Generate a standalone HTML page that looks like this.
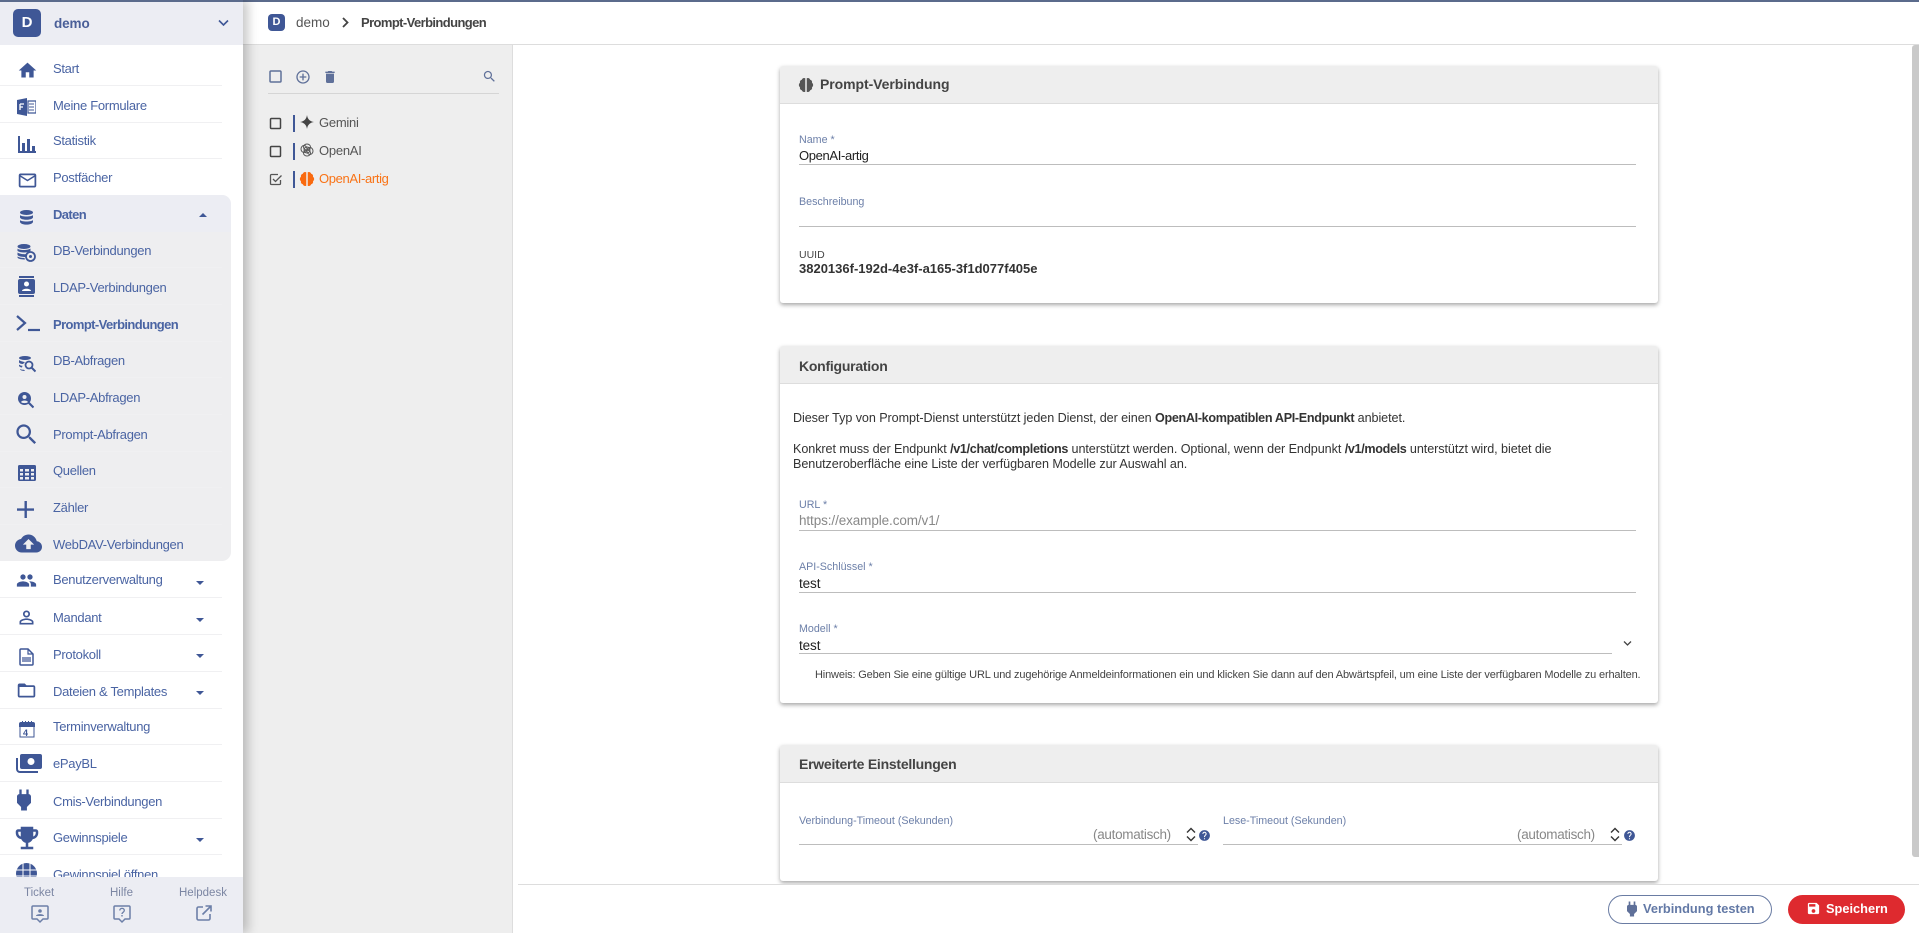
<!DOCTYPE html>
<html lang="de"><head><meta charset="utf-8"><title>Prompt-Verbindungen</title>
<style>
html,body{margin:0;padding:0;width:1919px;height:933px;overflow:hidden;background:#fff;font-family:"Liberation Sans",sans-serif}
.t{position:absolute;white-space:nowrap;line-height:16px;height:16px}
.abs{position:absolute}
svg.i{position:absolute;fill:#3f5796}
.n{left:53px;font-size:13px;letter-spacing:-.3px;color:#4a64a3}
.nb{font-weight:bold;letter-spacing:-.6px}
.sep{position:absolute;left:0;width:222px;height:1px;background:#f0f0f2}
.card{position:absolute;left:780px;width:878px;background:#fff;border-radius:3px;box-shadow:0 2px 4px rgba(0,0,0,.35)}
.ch{position:absolute;left:0;top:0;width:100%;height:37px;background:#eee;border-bottom:1px solid #ddd;border-radius:3px 3px 0 0}
.ct{font-size:14px;font-weight:bold;color:#444;letter-spacing:-.25px}
.lb{font-size:10.7px;color:#6c7fa8}
.v{font-size:13.5px;color:#222;letter-spacing:-.1px}
.ln{position:absolute;height:1px;background:#bdbdbd}
.p{font-size:12.6px;color:#333;left:793px;letter-spacing:-.07px}
.p b{letter-spacing:-.33px}
.ar{position:absolute;width:0;height:0;border-left:4px solid transparent;border-right:4px solid transparent}
.li{font-size:13px;color:#555;letter-spacing:-.25px}
.f{font-size:11.5px;color:#7c86a3}
</style></head><body>
<svg width="0" height="0" style="position:absolute"><defs>
<symbol id="plug" viewBox="0 0 24 24"><path d="M16.01 7L16 3h-2v4h-4V3H8v4h-.01C7 6.99 6 7.99 6 8.99v5.49L9.5 18v3h5v-3l3.5-3.51v-5.5c0-1-1-2-1.99-1.99z"/></symbol>
<symbol id="help" viewBox="0 0 24 24"><path d="M12 2C6.48 2 2 6.48 2 12s4.48 10 10 10 10-4.48 10-10S17.52 2 12 2zm1 17h-2v-2h2v2zm2.07-7.75l-.9.92C13.45 12.9 13 13.5 13 15h-2v-.5c0-1.1.45-2.1 1.17-2.83l1.24-1.26c.37-.36.59-.86.59-1.41 0-1.1-.9-2-2-2s-2 .9-2 2H8c0-2.21 1.79-4 4-4s4 1.79 4 4c0 .88-.36 1.68-.93 2.25z"/></symbol>
<symbol id="brain" viewBox="0 0 24 24"><path d="M11 3C9 2 7 3 6.500 5 4.500 5.500 3.500 7 4 9 2 10.500 2 13.500 4 15c-.5 2 .5 3.500 2.500 4 .5 2 2.500 3 4.500 2zM13 3c2-1 4 0 4.500 2 2 .5 3 2 2.500 4 2 1.500 2 4.500 0 6 .5 2-.5 3.500-2.500 4-.5 2-2.500 3-4.500 2z"/></symbol>
</defs></svg>

<!-- main surfaces -->
<div class="abs" style="left:513px;top:45px;width:1406px;height:888px;background:#fff"></div>
<div class="abs" style="left:243px;top:45px;width:269px;height:888px;background:#eee;border-right:1px solid #ddd"></div>
<div class="abs" style="left:243px;top:2px;width:1676px;height:42px;background:#fff;border-bottom:1px solid #ddd"></div>
<div class="abs" style="left:0;top:0;width:1919px;height:2px;background:#5b6b8c"></div>

<!-- breadcrumb -->
<div class="abs" style="left:268px;top:14px;width:17px;height:17px;border-radius:4px;background:#3f5796;color:#fff;font-size:11px;font-weight:bold;text-align:center;line-height:17px">D</div>
<div class="t" style="left:296px;top:15px;font-size:13.5px;color:#555">demo</div>
<svg class="abs" style="left:341px;top:17px" width="9" height="11" viewBox="0 0 9 11"><path d="M2 1l4.500 4.500L2 10" fill="none" stroke="#444" stroke-width="1.800"/></svg>
<div class="t" style="left:361px;top:15px;font-size:13px;letter-spacing:-.6px;font-weight:bold;color:#444">Prompt-Verbindungen</div>

<!-- list panel -->
<svg class="abs" style="left:269px;top:70px" width="14" height="14"><rect x="1" y="1" width="11" height="11" rx="1" fill="none" stroke="#5f7099" stroke-width="1.500"/></svg>
<svg class="i" style="left:295px;top:69px;fill:#5f7099" width="16" height="16" viewBox="0 0 24 24"><path d="M13 7h-2v4H7v2h4v4h2v-4h4v-2h-4V7zm-1-5C6.480 2 2 6.480 2 12s4.480 10 10 10 10-4.480 10-10S17.520 2 12 2zm0 18c-4.410 0-8-3.590-8-8s3.590-8 8-8 8 3.590 8 8-3.590 8-8 8z"/></svg>
<svg class="i" style="left:322px;top:68px;fill:#5f7099" width="16" height="18" viewBox="0 0 24 24"><path d="M6 19c0 1.100.9 2 2 2h8c1.100 0 2-.9 2-2V7H6v12zM19 4h-3.500l-1-1h-5l-1 1H5v2h14V4z"/></svg>
<svg class="i" style="left:482px;top:69px;fill:#5f7099" width="15" height="15" viewBox="0 0 24 24"><path d="M15.500 14h-.79l-.28-.27C15.410 12.590 16 11.110 16 9.500 16 5.910 13.090 3 9.500 3S3 5.910 3 9.500 5.910 16 9.500 16c1.610 0 3.090-.59 4.230-1.570l.27.28v.79l5 4.990L20.490 19l-4.990-5zm-6 0C7.010 14 5 11.990 5 9.500S7.010 5 9.500 5 14 7.010 14 9.500 11.990 14 9.500 14z"/></svg>
<div class="abs" style="left:268px;top:93px;width:231px;height:1px;background:#d5d5d5"></div>

<svg class="abs" style="left:269px;top:117px" width="14" height="14"><rect x="1.500" y="1.500" width="10" height="10" rx="1" fill="none" stroke="#444" stroke-width="1.500"/></svg>
<svg class="abs" style="left:269px;top:145px" width="14" height="14"><rect x="1.500" y="1.500" width="10" height="10" rx="1" fill="none" stroke="#444" stroke-width="1.500"/></svg>
<svg class="abs" style="left:269px;top:173px" width="14" height="14"><path d="M9 1.500H2.500a1 1 0 0 0-1 1v8a1 1 0 0 0 1 1h8a1 1 0 0 0 1-1V7" fill="none" stroke="#555" stroke-width="1.300"/><path d="M4 6l2.500 2.500L12.500 2.500" fill="none" stroke="#555" stroke-width="1.300"/></svg>
<div class="abs" style="left:293px;top:115px;width:2px;height:17px;background:#3f5796"></div>
<div class="abs" style="left:293px;top:143px;width:2px;height:17px;background:#3f5796"></div>
<div class="abs" style="left:293px;top:171px;width:2px;height:17px;background:#3f5796"></div>
<svg class="abs" style="left:300px;top:115px" width="14" height="14" viewBox="0 0 14 14"><path d="M7 0C7.500 4 10 6.500 14 7 10 7.500 7.500 10 7 14 6.500 10 4 7.500 0 7 4 6.500 6.500 4 7 0z" fill="#444"/></svg>
<svg class="abs" style="left:300px;top:143px" width="14" height="14" viewBox="0 0 14 14"><g fill="none" stroke="#555" stroke-width="1"><circle cx="7" cy="7" r="3"/><ellipse cx="7" cy="4" rx="3.500" ry="3"/><ellipse cx="7" cy="10" rx="3.500" ry="3"/><ellipse cx="4" cy="6" rx="3" ry="3.500"/><ellipse cx="10" cy="8" rx="3" ry="3.500"/></g></svg>
<svg class="abs" style="left:298px;top:170px;fill:#f96a10" width="18" height="18"><use href="#brain"/></svg>
<div class="t li" style="left:319px;top:115px">Gemini</div>
<div class="t li" style="left:319px;top:143px">OpenAI</div>
<div class="t li" style="left:319px;top:171px;color:#f97316;letter-spacing:-.35px">OpenAI-artig</div>

<!-- card 1 -->
<div class="card" style="top:66px;height:237px"><div class="ch"></div></div>
<svg class="abs" style="left:797px;top:76px;fill:#555" width="18" height="18"><use href="#brain"/></svg>
<div class="t ct" style="left:820px;top:76px;letter-spacing:-.07px">Prompt-Verbindung</div>
<div class="t lb" style="left:799px;top:132px">Name *</div>
<div class="t v" style="left:799px;top:148px;font-size:13px;letter-spacing:-.35px">OpenAI-artig</div>
<div class="ln" style="left:799px;top:164px;width:837px"></div>
<div class="t lb" style="left:799px;top:194px">Beschreibung</div>
<div class="ln" style="left:799px;top:226px;width:837px"></div>
<div class="t" style="left:799px;top:247px;font-size:10.5px;color:#444">UUID</div>
<div class="t" style="left:799px;top:261px;font-size:13px;font-weight:bold;color:#333">3820136f-192d-4e3f-a165-3f1d077f405e</div>

<!-- card 2 -->
<div class="card" style="top:346px;height:357px"><div class="ch"></div></div>
<div class="t ct" style="left:799px;top:358px">Konfiguration</div>
<div class="t p" style="top:410px">Dieser Typ von Prompt-Dienst unterstützt jeden Dienst, der einen <b>OpenAI-kompatiblen API-Endpunkt</b> anbietet.</div>
<div class="t p" style="top:441px">Konkret muss der Endpunkt <b>/v1/chat/completions</b> unterstützt werden. Optional, wenn der Endpunkt <b>/v1/models</b> unterstützt wird, bietet die</div>
<div class="t p" style="top:456px">Benutzeroberfläche eine Liste der verfügbaren Modelle zur Auswahl an.</div>
<div class="t lb" style="left:799px;top:497px">URL *</div>
<div class="t v" style="left:799px;top:513px;color:#888">https://example.com/v1/</div>
<div class="ln" style="left:799px;top:530px;width:837px"></div>
<div class="t lb" style="left:799px;top:559px">API-Schlüssel *</div>
<div class="t v" style="left:799px;top:576px">test</div>
<div class="ln" style="left:799px;top:592px;width:837px"></div>
<div class="t lb" style="left:799px;top:621px">Modell *</div>
<div class="t v" style="left:799px;top:638px">test</div>
<div class="ln" style="left:799px;top:653px;width:813px"></div>
<svg class="abs" style="left:1623px;top:640px" width="9" height="7"><path d="M1 1.500l3.500 3.500L8 1.500" fill="none" stroke="#444" stroke-width="1.300"/></svg>
<div class="t" style="left:815px;top:667px;font-size:11px;letter-spacing:-.15px;color:#444">Hinweis: Geben Sie eine gültige URL und zugehörige Anmeldeinformationen ein und klicken Sie dann auf den Abwärtspfeil, um eine Liste der verfügbaren Modelle zu erhalten.</div>

<!-- card 3 -->
<div class="card" style="top:745px;height:136px"><div class="ch"></div></div>
<div class="t ct" style="left:799px;top:756px">Erweiterte Einstellungen</div>
<div class="t lb" style="left:799px;top:813px">Verbindung-Timeout (Sekunden)</div>
<div class="t" style="left:1093px;top:827px;font-size:13.5px;letter-spacing:-.3px;color:#888">(automatisch)</div>
<svg class="abs" style="left:1186px;top:827px" width="10" height="15"><path d="M1 5.500l4-4 4 4M1 9.500l4 4 4-4" fill="none" stroke="#333" stroke-width="1.400"/></svg>
<svg class="i" style="left:1198px;top:829px" width="13" height="13"><use href="#help"/></svg>
<div class="ln" style="left:799px;top:844px;width:399px"></div>
<div class="t lb" style="left:1223px;top:813px">Lese-Timeout (Sekunden)</div>
<div class="t" style="left:1517px;top:827px;font-size:13.5px;letter-spacing:-.3px;color:#888">(automatisch)</div>
<svg class="abs" style="left:1610px;top:827px" width="10" height="15"><path d="M1 5.500l4-4 4 4M1 9.500l4 4 4-4" fill="none" stroke="#333" stroke-width="1.400"/></svg>
<svg class="i" style="left:1623px;top:829px" width="13" height="13"><use href="#help"/></svg>
<div class="ln" style="left:1223px;top:844px;width:399px"></div>

<!-- bottom bar -->
<div class="abs" style="left:518px;top:885px;width:1401px;height:48px;background:#fff"></div>
<div class="abs" style="left:518px;top:884px;width:1401px;height:1px;background:#ddd"></div>
<div class="abs" style="left:1608px;top:895px;width:162px;height:27px;border:1px solid #6a7ca3;border-radius:15px;background:#fff"></div>
<svg class="i" style="left:1622px;top:899px;fill:#5f7099" width="20" height="20"><use href="#plug"/></svg>
<div class="t" style="left:1643px;top:901px;font-size:12.8px;font-weight:bold;color:#6379a6">Verbindung testen</div>
<div class="abs" style="left:1788px;top:895px;width:117px;height:29px;border-radius:15px;background:#de2a2f"></div>
<svg class="i" style="left:1806px;top:901px;fill:#fff" width="15" height="15" viewBox="0 0 24 24"><path d="M17 3H5c-1.110 0-2 .9-2 2v14c0 1.100.89 2 2 2h14c1.100 0 2-.9 2-2V7l-4-4zm-5 16c-1.660 0-3-1.340-3-3s1.340-3 3-3 3 1.340 3 3-1.340 3-3 3zm3-10H5V5h10v4z"/></svg>
<div class="t" style="left:1826px;top:901px;font-size:12.8px;font-weight:bold;color:#fff">Speichern</div>

<!-- scrollbar -->
<div class="abs" style="left:1912px;top:45px;width:7px;height:812px;background:#c9c9c9;border-radius:3px 0 0 3px"></div>

<!-- sidebar -->
<div class="abs" style="left:0;top:0;width:243px;height:933px;background:#fff;box-shadow:5px 0 10px rgba(0,0,0,.22);overflow:hidden">
<div class="abs" style="left:0;top:2px;width:243px;height:43px;background:#ecedf3"></div>
<div class="abs" style="left:0;top:0;width:243px;height:2px;background:#5b6b8c"></div>
<div class="abs" style="left:13px;top:9px;width:28px;height:28px;border-radius:5px;background:#3f5796;color:#fff;font-size:15px;font-weight:bold;text-align:center;line-height:27px">D</div>
<div class="t" style="left:54px;top:16px;font-size:13.5px;font-weight:bold;letter-spacing:-.1px;color:#4a5f98">demo</div>
<svg class="abs" style="left:218px;top:19px" width="11" height="8"><path d="M1 1.500l4.500 4.500L10 1.500" fill="none" stroke="#3f5796" stroke-width="1.600"/></svg>

<div class="abs" style="left:0;top:195px;width:231px;height:366px;background:#eeeef0;border-radius:0 9px 9px 0"></div>
<div class="abs" style="left:0;top:195px;width:231px;height:37px;background:#ecedf3;border-radius:0 9px 0 0"></div>

<div class="sep" style="top:85px"></div><div class="sep" style="top:122px"></div><div class="sep" style="top:158px"></div>
<div class="sep" style="top:267px"></div><div class="sep" style="top:304px"></div><div class="sep" style="top:341px"></div><div class="sep" style="top:377px"></div><div class="sep" style="top:414px"></div><div class="sep" style="top:451px"></div><div class="sep" style="top:487px"></div><div class="sep" style="top:524px"></div>
<div class="sep" style="top:597px"></div><div class="sep" style="top:634px"></div><div class="sep" style="top:671px"></div><div class="sep" style="top:708px"></div><div class="sep" style="top:744px"></div><div class="sep" style="top:781px"></div><div class="sep" style="top:818px"></div><div class="sep" style="top:854px"></div>

<div class="t n" style="top:61px">Start</div>
<div class="t n" style="top:98px">Meine Formulare</div>
<div class="t n" style="top:133px">Statistik</div>
<div class="t n" style="top:170px">Postfächer</div>
<div class="t n nb" style="top:207px">Daten</div>
<div class="t n" style="top:243px">DB-Verbindungen</div>
<div class="t n" style="top:280px">LDAP-Verbindungen</div>
<div class="t n nb" style="top:317px">Prompt-Verbindungen</div>
<div class="t n" style="top:353px">DB-Abfragen</div>
<div class="t n" style="top:390px">LDAP-Abfragen</div>
<div class="t n" style="top:427px">Prompt-Abfragen</div>
<div class="t n" style="top:463px">Quellen</div>
<div class="t n" style="top:500px">Zähler</div>
<div class="t n" style="top:537px">WebDAV-Verbindungen</div>
<div class="t n" style="top:572px">Benutzerverwaltung</div>
<div class="t n" style="top:610px">Mandant</div>
<div class="t n" style="top:647px">Protokoll</div>
<div class="t n" style="top:684px">Dateien &amp; Templates</div>
<div class="t n" style="top:719px">Terminverwaltung</div>
<div class="t n" style="top:756px">ePayBL</div>
<div class="t n" style="top:794px">Cmis-Verbindungen</div>
<div class="t n" style="top:830px">Gewinnspiele</div>
<div class="t n" style="top:867px">Gewinnspiel öffnen</div>

<div class="ar" style="left:199px;top:213px;border-bottom:4px solid #3f5796"></div>
<div class="ar" style="left:196px;top:581px;border-top:4px solid #3f5796"></div>
<div class="ar" style="left:196px;top:618px;border-top:4px solid #3f5796"></div>
<div class="ar" style="left:196px;top:654px;border-top:4px solid #3f5796"></div>
<div class="ar" style="left:196px;top:691px;border-top:4px solid #3f5796"></div>
<div class="ar" style="left:196px;top:838px;border-top:4px solid #3f5796"></div>

<!-- nav icons -->
<svg class="i" style="left:17px;top:60px" width="21" height="21" viewBox="0 0 24 24"><path d="M10 20v-6h4v6h5v-8h3L12 3 2 12h3v8z"/></svg>
<svg class="i" style="left:17px;top:98px" width="19" height="18" viewBox="0 0 19 18"><path d="M0 2l10-2v18L0 16z"/><path d="M11 3h8v12h-8z" fill="none" stroke="#3f5796" stroke-width="1.200"/><path d="M12 6h5M12 9h5M12 12h5" stroke="#3f5796"/><path d="M3 6h4M3 9h3M3 6v6" stroke="#fff" stroke-width="1.300" fill="none"/></svg>
<svg class="i" style="left:18px;top:136px" width="18" height="17" viewBox="0 0 18 17"><path d="M0 0h2v15h16v2H0zM4 7h3v8H4zM9 3h3v12H9zM14 10h3v5h-3z"/></svg>
<svg class="i" style="left:17px;top:170px" width="21" height="21" viewBox="0 0 24 24"><path d="M20 4H4c-1.100 0-1.990.9-1.990 2L2 18c0 1.100.9 2 2 2h16c1.100 0 2-.9 2-2V6c0-1.100-.9-2-2-2zm0 14H4V8l8 5 8-5v10zm-8-7L4 6h16l-8 5z"/></svg>
<svg class="i" style="left:19px;top:210px" width="15" height="15" viewBox="0 0 15 15"><ellipse cx="7.500" cy="2.500" rx="6.500" ry="2.500"/><path d="M1 5c1 2 12 2 13 0v2.500c-1 3-12 3-13 0zM1 10c1 2 12 2 13 0v2c-1 3.500-12 3.500-13 0z"/></svg>
<svg class="i" style="left:17px;top:244px" width="19" height="18" viewBox="0 0 19 18"><ellipse cx="7" cy="2.500" rx="6.500" ry="2.500"/><path d="M.5 4.500c1 2 11 2 13 0V7c-3 2-10 2-13 0zM.5 8.500c2 1.500 7 2 9 1.500l-1 3c-3 0-7-.5-8-2zM.5 12.500c1.500 1 4 1.500 7 1.500l.5 1.500c-3 0-7-.5-7.500-2z"/><circle cx="13.500" cy="12.500" r="4.500" fill="none" stroke="#3f5796" stroke-width="1.800"/><circle cx="13.500" cy="12.500" r="1.500"/></svg>
<svg class="i" style="left:18px;top:276px" width="17" height="21" viewBox="0 0 17 21"><path d="M1 0h15v2H1zM1 19h15v2H1z"/><path d="M2 3h13a2 2 0 0 1 2 2v11a2 2 0 0 1-2 2H2a2 2 0 0 1-2-2V5a2 2 0 0 1 2-2z"/><circle cx="8.500" cy="8" r="2.500" fill="#fff"/><path d="M4 15c0-3 9-3 9 0z" fill="#fff"/></svg>
<svg class="abs" style="left:16px;top:315px" width="24" height="18" viewBox="0 0 24 18"><path d="M1 1l8 7-8 7" fill="none" stroke="#3f5796" stroke-width="2.200"/><path d="M12 15h12" stroke="#3f5796" stroke-width="2.200"/></svg>
<svg class="i" style="left:19px;top:356px" width="17" height="17" viewBox="0 0 17 17"><ellipse cx="6" cy="2" rx="6" ry="2"/><path d="M0 4c1 1 5 2 6 2l-2 2c-2 0-3.500-.5-4-1.500zM0 8.500c1 1 2.500 1.200 3.500 1.300L3 11.500C2 11.500.5 11 0 10zM1 13c1 .5 2.500.8 4 .8L6 15C4 15 1 14.500 1 13z"/><circle cx="10" cy="9" r="3.500" fill="none" stroke="#3f5796" stroke-width="1.800"/><path d="M12.500 11.500l4 4" stroke="#3f5796" stroke-width="2"/></svg>
<svg class="i" style="left:18px;top:392px" width="16" height="17" viewBox="0 0 16 17"><circle cx="6.500" cy="6.500" r="6.500"/><circle cx="6.500" cy="5" r="2" fill="#eeeef0"/><path d="M3 10c1-2 6-2 7 0-1 1.500-6 1.500-7 0z" fill="#eeeef0"/><path d="M11 11l4.500 4.500" stroke="#3f5796" stroke-width="2.200"/></svg>
<svg class="i" style="left:13px;top:421px" width="27" height="27" viewBox="0 0 24 24"><path d="M15.500 14h-.79l-.28-.27C15.410 12.590 16 11.110 16 9.500 16 5.910 13.090 3 9.500 3S3 5.910 3 9.500 5.910 16 9.500 16c1.610 0 3.090-.59 4.230-1.570l.27.28v.79l5 4.990L20.490 19l-4.990-5zm-6 0C7.010 14 5 11.990 5 9.500S7.010 5 9.500 5 14 7.010 14 9.500 11.990 14 9.500 14z"/></svg>
<svg class="i" style="left:18px;top:465px" width="18" height="16" viewBox="0 0 18 16"><path d="M1.500 0h15A1.500 1.500 0 0 1 18 1.500v13a1.500 1.500 0 0 1-1.500 1.500h-15A1.500 1.500 0 0 1 0 14.500v-13A1.500 1.500 0 0 1 1.500 0z"/><path d="M2 4h3v2.500H2zM7 4h4v2.500H7zM13 4h3v2.500h-3zM2 8h3v2.500H2zM7 8h4v2.500H7zM13 8h3v2.500h-3zM2 12h3v2.500H2zM7 12h4v2.500H7zM13 12h3v2.500h-3z" fill="#eeeef0"/></svg>
<svg class="i" style="left:16px;top:500px" width="19" height="19" viewBox="0 0 19 19"><path d="M8.500 1h2.400v7.400H18v2.400h-7.100V18H8.500v-7.200H1V8.400h7.500z"/></svg>
<svg class="i" style="left:15px;top:530px" width="27" height="27" viewBox="0 0 24 24"><path d="M19.350 10.040C18.670 6.590 15.640 4 12 4 9.110 4 6.600 5.640 5.350 8.040 2.340 8.360 0 10.910 0 14c0 3.310 2.690 6 6 6h13c2.760 0 5-2.240 5-5 0-2.640-2.050-4.780-4.650-4.960zM14 13v4h-4v-4H7l5-5 5 5h-3z"/></svg>
<svg class="i" style="left:16px;top:570px" width="21" height="21" viewBox="0 0 24 24"><path d="M16 11c1.660 0 2.990-1.340 2.990-3S17.660 5 16 5c-1.660 0-3 1.340-3 3s1.340 3 3 3zm-8 0c1.660 0 2.990-1.340 2.990-3S9.660 5 8 5C6.340 5 5 6.340 5 8s1.340 3 3 3zm0 2c-2.330 0-7 1.170-7 3.500V19h14v-2.500c0-2.330-4.670-3.500-7-3.500zm8 0c-.29 0-.62.02-.97.05 1.160.84 1.970 1.970 1.970 3.450V19h6v-2.500c0-2.330-4.670-3.500-7-3.500z"/></svg>
<svg class="i" style="left:16px;top:607px" width="21" height="21" viewBox="0 0 24 24"><path d="M12 5.900c1.160 0 2.100.94 2.100 2.100s-.94 2.100-2.100 2.100S9.900 9.160 9.900 8s.94-2.100 2.100-2.100m0 9c2.970 0 6.100 1.460 6.100 2.100v1.100H5.900V17c0-.64 3.130-2.100 6.100-2.100M12 4C9.790 4 8 5.790 8 8s1.790 4 4 4 4-1.790 4-4-1.790-4-4-4zm0 9c-2.670 0-8 1.340-8 4v3h16v-3c0-2.660-5.330-4-8-4z"/></svg>
<svg class="i" style="left:19px;top:648px" width="15" height="18" viewBox="0 0 15 18"><path d="M2 1h7l5 5v10a1 1 0 0 1-1 1H2a1 1 0 0 1-1-1V2a1 1 0 0 1 1-1z" fill="none" stroke="#3f5796" stroke-width="1.500"/><path d="M3 9h9v5H3z" fill="#8795bd"/><path d="M9 1v5h5" fill="none" stroke="#3f5796" stroke-width="1.200"/></svg>
<svg class="i" style="left:16px;top:680px" width="21" height="21" viewBox="0 0 24 24"><path d="M20 6h-8l-2-2H4c-1.100 0-1.990.9-1.990 2L2 18c0 1.100.9 2 2 2h16c1.100 0 2-.9 2-2V8c0-1.100-.9-2-2-2zm0 12H4V8h16v10z"/></svg>
<svg class="i" style="left:19px;top:721px" width="16" height="17" viewBox="0 0 16 17"><path d="M2 1h12a2 2 0 0 1 2 2v3H0V3a2 2 0 0 1 2-2z"/><path d="M3 0h1v2H3zM6 0h1v2H6zM9 0h1v2H9zM12 0h1v2h-1z"/><path d="M1 6v10h14V6" fill="#fff" stroke="#3f5796"/></svg>
<div class="t" style="left:23px;top:729px;font-size:9px;font-weight:bold;color:#3f5796;height:9px;line-height:9px">4</div>
<svg class="i" style="left:16px;top:754px" width="26" height="19" viewBox="0 0 26 19"><path d="M6 0h18a2 2 0 0 1 2 2v11a2 2 0 0 1-2 2H6a2 2 0 0 1-2-2V2a2 2 0 0 1 2-2z"/><circle cx="15" cy="7.500" r="3.500" fill="#fff"/><path d="M0 4h2v11a2 2 0 0 0 2 2h18v2H4a4 4 0 0 1-4-4z"/></svg>
<svg class="i" style="left:10px;top:786px" width="28" height="28"><use href="#plug"/></svg>
<svg class="i" style="left:12px;top:823px" width="30" height="30" viewBox="0 0 24 24"><path d="M19 5h-2V3H7v2H5c-1.100 0-2 .9-2 2v1c0 2.550 1.920 4.630 4.390 4.940.63 1.500 1.980 2.630 3.610 2.960V19H7v2h10v-2h-4v-3.100c1.630-.33 2.980-1.460 3.610-2.960C19.080 12.630 21 10.550 21 8V7c0-1.100-.9-2-2-2zM5 8V7h2v3.820C5.840 10.400 5 9.300 5 8zm14 0c0 1.300-.84 2.400-2 2.820V7h2v1z"/></svg>
<svg class="i" style="left:16px;top:863px" width="21" height="21" viewBox="0 0 21 21"><circle cx="10.500" cy="10.500" r="10.500"/><path d="M0 7h21M0 13h21M7 0v21M14 0v21" stroke="#fff" stroke-width="1"/></svg>

<!-- footer -->
<div class="abs" style="left:0;top:877px;width:243px;height:56px;background:#ecedf3"></div>
<div class="t f" style="left:24px;top:885px">Ticket</div>
<div class="t f" style="left:110px;top:885px">Hilfe</div>
<div class="t f" style="left:179px;top:885px">Helpdesk</div>
<svg class="abs" style="left:31px;top:905px" width="18" height="19" viewBox="0 0 18 19"><path d="M2 1h14a1 1 0 0 1 1 1v11a1 1 0 0 1-1 1h-4l-3 3-3-3H2a1 1 0 0 1-1-1V2a1 1 0 0 1 1-1z" fill="none" stroke="#6c7fa8" stroke-width="1.500"/><circle cx="9" cy="6" r="1.800" fill="#6c7fa8"/><path d="M5 11c0-2.500 8-2.500 8 0z" fill="#6c7fa8"/></svg>
<svg class="abs" style="left:113px;top:905px" width="18" height="19" viewBox="0 0 18 19"><path d="M2 1h14a1 1 0 0 1 1 1v11a1 1 0 0 1-1 1h-4l-3 3-3-3H2a1 1 0 0 1-1-1V2a1 1 0 0 1 1-1z" fill="none" stroke="#6c7fa8" stroke-width="1.500"/><path d="M6.800 5.500c0-2.800 4.500-2.800 4.500 0 0 1.800-2.300 1.800-2.300 3.500" fill="none" stroke="#6c7fa8" stroke-width="1.300"/><path d="M8.300 10h1.400v1.500H8.300z" fill="#6c7fa8"/></svg>
<svg class="abs" style="left:196px;top:905px" width="16" height="16" viewBox="0 0 16 16"><path d="M7 2H2.500a1.500 1.500 0 0 0-1.500 1.500v10A1.500 1.500 0 0 0 2.500 15h10a1.500 1.500 0 0 0 1.500-1.500V9" fill="none" stroke="#6c7fa8" stroke-width="1.600"/><path d="M9.500 1H15v5.500M15 1L6.500 9.500" fill="none" stroke="#6c7fa8" stroke-width="1.600"/></svg>
</div>
</body></html>
